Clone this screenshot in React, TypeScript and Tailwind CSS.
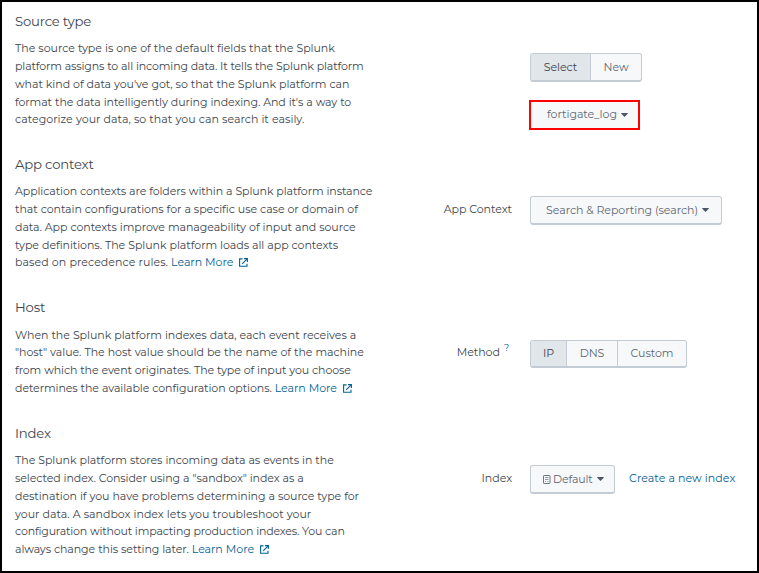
import React from "react";

const Ext = () => (
  <svg className="ml-[3px] inline-block align-[-1px]" width="9" height="9" viewBox="0 0 9 9" fill="none" stroke="#006297" strokeWidth="1.1">
    <path d="M3.5 .9H.6V8.3H8V5.7M5 .6H8.4V4M8.2 .8L3.2 5.8" />
  </svg>
);

const Caret = () => (
  <svg className="ml-[4px] shrink-0" width="7" height="4" viewBox="0 0 7 4">
    <path d="M.3 0H6.7Q7 .4 6.7 .7L3.5 4L.3 .7Q0 .4 .3 0Z" fill="#4d5763" />
  </svg>
);

const DocIcon = () => (
  <svg className="mr-[2px] shrink-0" width="8" height="9" viewBox="0 0 8 9" fill="none" stroke="#6b7683" strokeWidth="1">
    <rect x=".5" y=".5" width="6.5" height="8" rx=".6" />
    <path d="M2 2.5H5.5M2 4.5H5.5M2 6.5H3M4.3 6.5H5.5" strokeWidth=".7" />
  </svg>
);

type Line = [text: string, spacing: string];
type SectionProps = { title: string; lines: Line[]; more?: boolean; size: string; gap?: string; children: React.ReactNode };

const Section = ({ title, lines, more, size, gap = "mt-[10px]", children }: SectionProps) => (
  <section className={`flex ${size}`}>
    <div className="w-[421px] shrink-0 pl-[13px] text-[#3c444d]">
      <h2 className="h-[18px] text-[13.2px] leading-[18px] tracking-[-0.18px]">{title}</h2>
      <div className={`${gap} text-[11px] leading-[17.85px]`}>
        {lines.map(([text, spacing], i) => (
          <div key={text} className={`whitespace-nowrap [word-spacing:0.2px] ${spacing}`}>
            {text}
            {more && i === lines.length - 1 && (
              <a className="tracking-[-0.03px] text-[#006297]"> Learn More <Ext /></a>
            )}
          </div>
        ))}
      </div>
    </div>
    <div className="pt-[41px] text-[11px] tracking-[-0.03px] text-[#5c6773]">{children}</div>
  </section>
);

const Label = ({ children }: { children?: React.ReactNode }) => (
  <div className="mr-[18px] w-[89px] text-right leading-[26px] text-[#3c444d]">{children}</div>
);

const Button = ({ size, children }: { size: string; children: React.ReactNode }) => (
  <button className={`flex h-[29px] items-center whitespace-nowrap rounded-[3px] border border-b-2 border-[#c3cbd4] bg-[#f7f8fa] tracking-[-0.03px] ${size}`}>{children}</button>
);

const Segments = ({ items, size = "h-[29px]" }: { items: [string, string][]; size?: string }) => (
  <div className={`flex overflow-hidden rounded-[3px] border border-b-2 border-[#c3cbd4] bg-[#f7f8fa] ${size}`}>
    {items.map(([t, w], i) => (
      <button key={t} className={`${w} text-center tracking-[-0.03px] ${i ? "border-l border-[#c3cbd4]" : "bg-[#e1e6eb] text-[#3c444d]"}`}>{t}</button>
    ))}
  </div>
);

export default function App() {
  return (
    <main className="h-[573px] w-[759px] overflow-hidden border-2 border-black bg-white pt-[10px] font-['Montserrat','Lato',sans-serif]">
      <Section
        size="h-[143px]"
        title="Source type"
        lines={[
          ["The source type is one of the default fields that the Splunk", "tracking-[-0.03px]"],
          ["platform assigns to all incoming data. It tells the Splunk platform", "tracking-[-0.14px]"],
          ["what kind of data you've got, so that the Splunk platform can", "tracking-[-0.06px]"],
          ["format the data intelligently during indexing. And it's a way to", "tracking-[-0.08px]"],
          ["categorize your data, so that you can search it easily.", "tracking-[0.03px]"],
        ]}
      >
        <div className="flex">
          <Label />
          <Segments items={[["Select", "w-[59px]"], ["New", "w-[51px]"]]} />
        </div>
        <div className="ml-[106px] mt-[18px] flex h-[30px] w-[111px] items-center border-2 border-[#ff0000] bg-[#f7f8fa] pb-px pl-[16px]">
          fortigate_log
          <Caret />
        </div>
      </Section>
      <Section
        size="h-[143px]"
        title="App context"
        more
        lines={[
          ["Application contexts are folders within a Splunk platform instance", "tracking-[-0.1px]"],
          ["that contain configurations for a specific use case or domain of", "tracking-[-0.06px]"],
          ["data. App contexts improve manageability of input and source", "tracking-[-0.06px]"],
          ["type definitions. The Splunk platform loads all app contexts", "tracking-[-0.05px]"],
          ["based on precedence rules.", "tracking-[0.06px]"],
        ]}
      >
        <div className="flex">
          <Label>App Context</Label>
          <Button size="w-[192px] pl-[15px]">Search &amp; Reporting (search)<Caret /></Button>
        </div>
      </Section>
      <Section
        size="h-[126px]"
        gap="mt-[10.5px]"
        title="Host"
        more
        lines={[
          ["When the Splunk platform indexes data, each event receives a", "tracking-[-0.04px]"],
          ["\"host\" value. The host value should be the name of the machine", "tracking-[-0.05px]"],
          ["from which the event originates. The type of input you choose", "tracking-[-0.1px]"],
          ["determines the available configuration options.", "tracking-[-0.08px]"],
        ]}
      >
        <div className="flex pt-px">
          <Label>
            <span className="-mt-px flex justify-end">Method<span className="ml-[4px] mr-[3px] -mt-[4px] text-[9px] text-[#006297]">?</span></span>
          </Label>
          <Segments size="h-[28px]" items={[["IP", "w-[35px]"], ["DNS", "w-[51px]"], ["Custom", "w-[69px]"]]} />
        </div>
      </Section>
      <Section
        size="h-[147px]"
        title="Index"
        more
        lines={[
          ["The Splunk platform stores incoming data as events in the", "tracking-[-0.06px]"],
          ["selected index. Consider using a \"sandbox\" index as a", "tracking-[-0.08px]"],
          ["destination if you have problems determining a source type for", "tracking-[-0.06px]"],
          ["your data. A sandbox index lets you troubleshoot your", "tracking-[0px]"],
          ["configuration without impacting production indexes. You can", "tracking-[-0.17px]"],
          ["always change this setting later.", "tracking-[-0.08px]"],
        ]}
      >
        <div className="flex">
          <Label>Index</Label>
          <Button size="w-[85px] pl-[12px]"><DocIcon /><span className="tracking-[-0.15px]">Default</span><Caret /></Button>
          <a className="ml-[14px] whitespace-nowrap leading-[26px] tracking-[0.08px] text-[#006297]">Create a new index</a>
        </div>
      </Section>
    </main>
  );
}
